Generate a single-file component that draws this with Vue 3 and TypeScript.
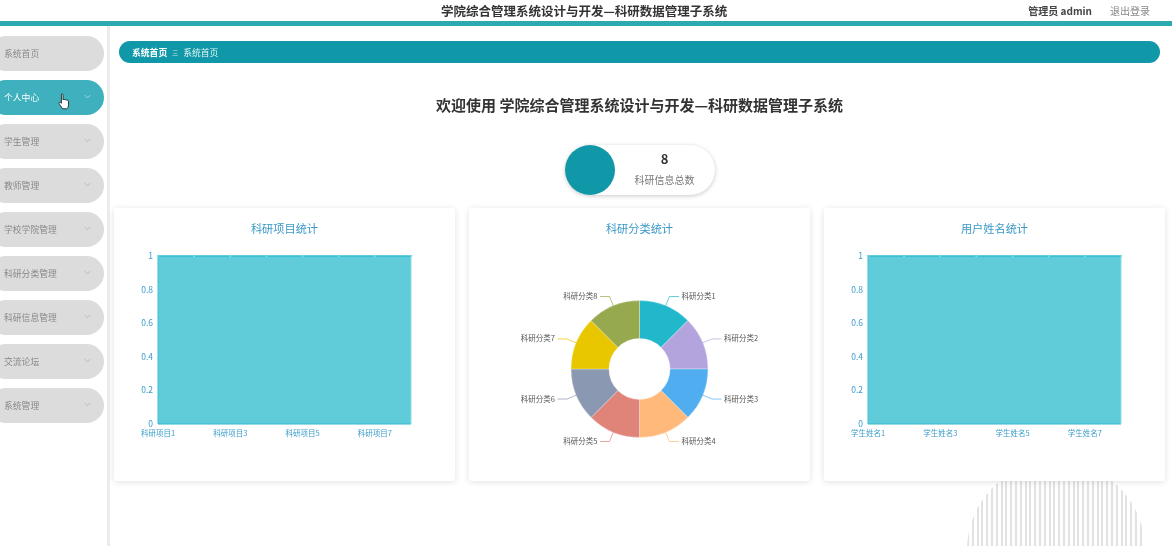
<script setup lang="ts">
type Menu = { label: string; arrow: boolean; active?: boolean }
type Card = { title: string; prefix?: string }

const menus: Menu[] = [
  { label: '系统首页', arrow: false },
  { label: '个人中心', arrow: true, active: true },
  { label: '学生管理', arrow: true },
  { label: '教师管理', arrow: true },
  { label: '学校学院管理', arrow: true },
  { label: '科研分类管理', arrow: true },
  { label: '科研信息管理', arrow: true },
  { label: '交流论坛', arrow: true },
  { label: '系统管理', arrow: true },
]

const appName = '学院综合管理系统设计与开发—科研数据管理子系统'

const cards: Card[] = [
  { title: '科研项目统计', prefix: '科研项目' },
  { title: '科研分类统计' },
  { title: '用户姓名统计', prefix: '学生姓名' },
]

// chart coordinates, relative to the svg in each card
const left = 44
const right = 297
const top = 8
const bottom = 176
const step = (right - left) / 7
const points = Array.from({ length: 8 }, (_, i) => left + i * step)
const yTicks = [1, 0.8, 0.6, 0.4, 0.2, 0].map((v) => ({
  label: String(v),
  y: bottom - (bottom - top) * v,
}))
const areaPoints = `${left},${top} ${right},${top} ${right},${bottom} ${left},${bottom}`

const cx = 170.5
const cy = 121
const outer = 68.5
const inner = 30.5
const colors = ['#22b8cc', '#b4a4de', '#50aef0', '#ffb97a', '#e08379', '#8b98b2', '#e8c600', '#97a94e']

function polar(r: number, deg: number): [number, number] {
  const a = (deg * Math.PI) / 180
  return [cx + r * Math.sin(a), cy - r * Math.cos(a)]
}

const slices = colors.map((color, i) => {
  const a0 = i * 45
  const a1 = a0 + 45
  const mid = a0 + 22.5
  const [x0, y0] = polar(outer, a0)
  const [x1, y1] = polar(outer, a1)
  const [x2, y2] = polar(inner, a1)
  const [x3, y3] = polar(inner, a0)
  const [lx0, ly0] = polar(outer, mid)
  const [lx1, ly1] = polar(outer + 10, mid)
  const isRight = mid < 180
  const lx2 = lx1 + (isRight ? 9.5 : -9.5)
  return {
    color,
    d: `M${x0} ${y0}A${outer} ${outer} 0 0 1 ${x1} ${y1}L${x2} ${y2}A${inner} ${inner} 0 0 0 ${x3} ${y3}Z`,
    line: `${lx0},${ly0} ${lx1},${ly1} ${lx2},${ly1}`,
    label: `科研分类${i + 1}`,
    tx: lx2 + (isRight ? 2.5 : -2.5),
    ty: ly1 + 2.5,
    anchor: isRight ? 'start' : 'end',
  }
})
</script>

<template>
  <div class="page">
    <div class="deco"></div>
    <header class="topbar">
      <div class="app-name">{{ appName }}</div>
      <div class="user">
        <span class="user-name">管理员 admin</span>
        <span class="logout">退出登录</span>
      </div>
    </header>

    <div class="body">
      <aside class="sidebar">
        <div v-for="m in menus" :key="m.label" class="menu-item" :class="{ active: m.active }">
          <span>{{ m.label }}</span>
          <svg v-if="m.arrow" class="chevron" viewBox="0 0 8 5" width="7" height="5">
            <path d="M1 1l3 3 3-3" fill="none" stroke="currentColor" stroke-width="0.8" />
          </svg>
          <svg v-if="m.active" class="cursor" viewBox="0 0 12 17" width="12" height="17">
            <path
              d="M3.4 1.2c.7-.5 1.6 0 1.6.9v4.8c.3-.6 1.7-.6 2 .1.4-.5 1.6-.4 1.8.3.5-.3 1.6 0 1.7.8v3.8c0 1.8-1 3.6-1.6 3.9H4.6c-.6-.8-1.6-2.5-2.9-4.2-.7-1-.9-1.7-.3-2.2.6-.5 1.3 0 2 .9V2.1c0-.4 0-.7 0-.9z"
              fill="#fff"
              stroke="#222"
              stroke-width="0.9"
            />
          </svg>
        </div>
      </aside>

      <main class="main">
        <div class="crumb">
          <b>系统首页</b>
          <span class="sep">三</span>
          <span>系统首页</span>
        </div>

        <h1 class="welcome">欢迎使用 {{ appName }}</h1>

        <div class="stat">
          <div class="stat-dot"></div>
          <div class="stat-text">
            <div class="stat-num">8</div>
            <div class="stat-label">科研信息总数</div>
          </div>
        </div>

        <div class="cards">
          <section v-for="c in cards" :key="c.title" class="card">
            <h2>{{ c.title }}</h2>
            <svg class="chart" viewBox="0 0 341 233" width="341" height="233">
              <g v-if="c.prefix">
                <polygon :points="areaPoints" fill="#60ccd9" />
                <line :x1="left" :y1="top" :x2="right" :y2="top" stroke="#2fbccf" stroke-width="1.5" />
                <line :x1="left" :y1="bottom" :x2="right" :y2="bottom" stroke="#35b5d0" stroke-width="1.2" />
                <line :x1="left" :y1="top" :x2="left" :y2="bottom" stroke="#3cc0d2" />
                <line :x1="right" :y1="top" :x2="right" :y2="bottom" stroke="#8adde6" />
                <circle v-for="p in points" :key="p" :cx="p" :cy="top" r="1.2" fill="#7fd6e0" />
                <text v-for="t in yTicks" :key="t.label" :x="left - 5" :y="t.y + 3" text-anchor="end" class="tick">{{ t.label }}</text>
                <text v-for="i in [0, 2, 4, 6]" :key="i" :x="points[i]" y="187.5" text-anchor="middle" class="tick small">{{ c.prefix }}{{ i + 1 }}</text>
              </g>
              <g v-else>
                <path v-for="s in slices" :key="s.label" :d="s.d" :fill="s.color" stroke="#fff" stroke-width="0.3" />
                <polyline v-for="s in slices" :key="s.label" :points="s.line" fill="none" :stroke="s.color" stroke-width="0.7" />
                <text v-for="s in slices" :key="s.label" :x="s.tx" :y="s.ty" :text-anchor="s.anchor" class="pie-label">{{ s.label }}</text>
              </g>
            </svg>
          </section>
        </div>
      </main>
    </div>
  </div>
</template>

<style>
html,
body {
  margin: 0;
  background: #fff;
}
</style>

<style scoped>
.page {
  position: relative;
  height: 546px;
  overflow: hidden;
  display: flex;
  flex-direction: column;
  background: #fff;
  font-family: "Noto Sans CJK SC", "Open Sans", sans-serif;
  filter: blur(0.45px);
}

.deco {
  position: absolute;
  left: 967px;
  top: 461px;
  width: 178px;
  height: 178px;
  border-radius: 50%;
  background: repeating-linear-gradient(90deg, #e2e2e2 0 2px, #fff 2px 4.8px);
}

.topbar {
  position: relative;
  height: 21px;
  flex: none;
  display: flex;
  align-items: center;
  justify-content: space-between;
  padding: 0 22px 0 441px;
  background: #fff;
  border-bottom: 5px solid #2baab0;
}

.app-name {
  font-size: 12.5px;
  font-weight: 700;
  color: #333;
}

.user {
  display: flex;
  align-items: center;
  gap: 18px;
  font-size: 10px;
}

.user-name {
  font-weight: 700;
  color: #444;
}

.logout {
  color: #888;
}

.body {
  position: relative;
  flex: 1;
  display: flex;
  min-height: 0;
}

.sidebar {
  width: 107px;
  flex: none;
  display: flex;
  flex-direction: column;
  gap: 9px;
  padding-top: 10px;
  overflow: hidden;
  border-right: 3px solid #ececec;
  background: #fff;
}

.menu-item {
  position: relative;
  height: 35px;
  width: 116px;
  margin-left: -12px;
  flex: none;
  display: flex;
  align-items: center;
  padding-left: 16px;
  box-sizing: border-box;
  border-radius: 18px;
  background: #dcdcdc;
  color: #888;
  font-size: 8.8px;
}

.menu-item.active {
  background: #3fb0bd;
  color: #fff;
}

.chevron {
  position: absolute;
  left: 96px;
  top: 14px;
  color: #a8a8a8;
}

.active .chevron {
  color: #d5eef1;
}

.cursor {
  position: absolute;
  left: 70px;
  top: 13px;
}

.main {
  position: relative;
  flex: 1;
  min-width: 0;
  padding: 15px 7px 0 4px;
}

.crumb {
  height: 22px;
  margin: 0 5px;
  display: flex;
  align-items: center;
  padding-left: 13px;
  border-radius: 11px;
  background: #1098a8;
  color: #e6f5f6;
  font-size: 8.8px;
}

.crumb b {
  color: #fff;
  font-weight: 700;
}

.sep {
  margin: 0 5px;
  font-size: 6px;
  color: #bfe4e8;
}

.welcome {
  margin: 32px 0 30px;
  height: 20px;
  line-height: 20px;
  font-size: 15px;
  font-weight: 700;
  color: #333;
  text-align: center;
}

.stat {
  width: 150px;
  height: 50px;
  margin: 0 auto 13px;
  display: flex;
  align-items: center;
  border-radius: 25px;
  background: #fff;
  box-shadow: 0 1px 4px rgba(0, 0, 0, 0.22);
}

.stat-dot {
  width: 50px;
  height: 50px;
  flex: none;
  border-radius: 50%;
  background: #1098a8;
}

.stat-text {
  flex: 1;
  text-align: center;
}

.stat-num {
  font-size: 13px;
  font-weight: 700;
  line-height: 18px;
  margin-top: -3px;
  margin-bottom: 5px;
  color: #333;
}

.stat-label {
  font-size: 10px;
  line-height: 14px;
  color: #777;
}

.cards {
  display: grid;
  grid-template-columns: repeat(3, 341px);
  gap: 14px;
}

.card {
  height: 273px;
  background: #fff;
  border-radius: 2px;
  box-shadow: 0 1px 6px rgba(0, 0, 0, 0.12);
}

.card h2 {
  margin: 0;
  height: 40px;
  line-height: 40px;
  font-size: 11.2px;
  font-weight: 400;
  color: #3a98c8;
  text-align: center;
}

.chart {
  display: block;
}

.tick {
  font-size: 8.5px;
  fill: #3a9ccb;
}

.tick.small {
  font-size: 7.5px;
}

.pie-label {
  font-size: 7.5px;
  fill: #555;
}
</style>
